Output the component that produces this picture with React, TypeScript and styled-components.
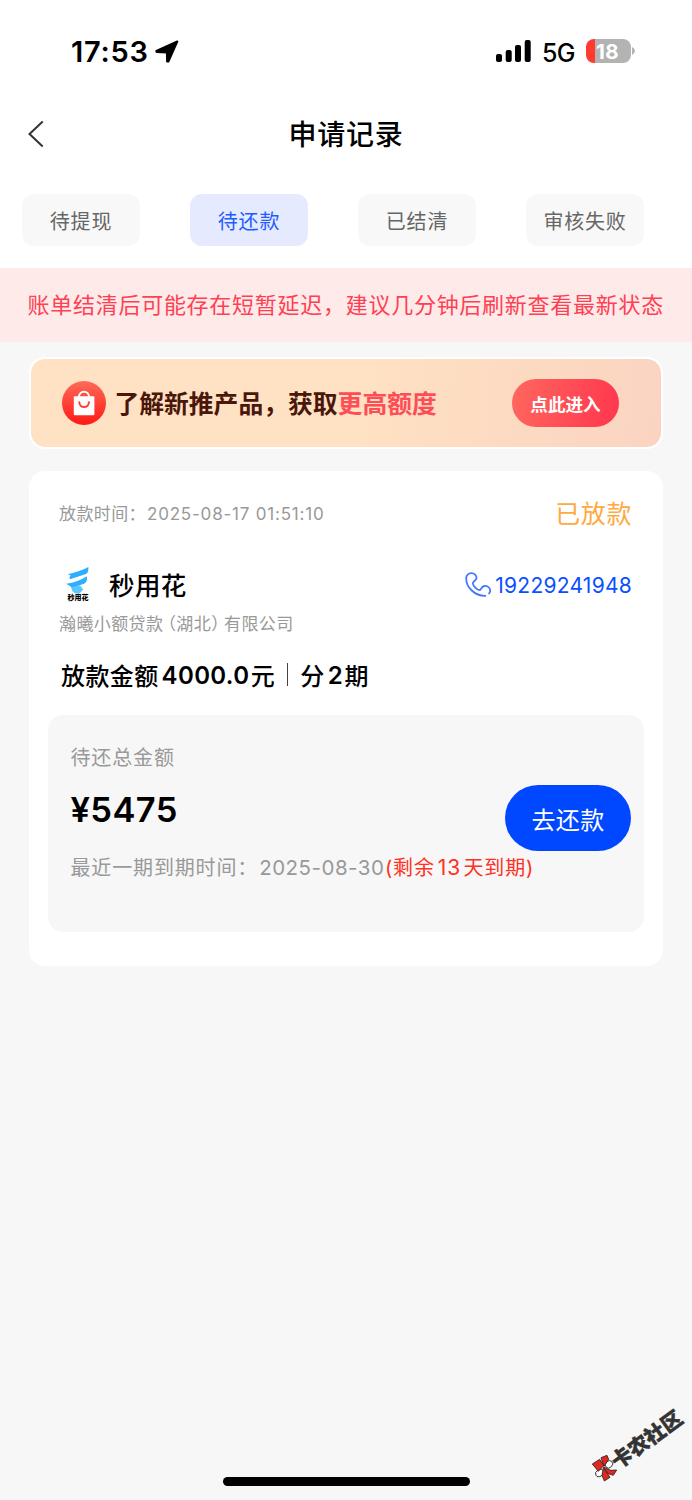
import React from "react";
import styled, { createGlobalStyle } from "styled-components";

const GlobalStyle = createGlobalStyle`
  * { box-sizing: border-box; }
  body {
    margin: 0;
    background: #f7f7f7;
    font-family: Inter, "Noto Sans CJK SC", sans-serif;
    color: #000;
  }
`;

const Page = styled.div`
  width: 692px;
  height: 1500px;
  display: flex;
  flex-direction: column;
  overflow: hidden;
  position: relative;
  background: #f7f7f7;
`;

const StatusBar = styled.header`
  height: 102px;
  padding: 0 57px 0 71px;
  background: #fff;
  display: flex;
  align-items: center;
  justify-content: space-between;
`;

const StatusGroup = styled.div`
  display: flex;
  align-items: center;
`;

const Clock = styled.span`
  font-size: 29px;
  font-weight: 600;
  line-height: 36px;
  width: 84px;
  padding-top: 1px;
  letter-spacing: 0.75px;
`;

const Network = styled.span`
  font-size: 25px;
  font-weight: 500;
  line-height: 30px;
  width: 44px;
  margin-left: 11px;
  margin-top: 3px;
  letter-spacing: -0.6px;
`;

const Battery = styled.div`
  width: 45px;
  height: 24px;
  border-radius: 8px;
  background: linear-gradient(90deg, #ff3b30 0 9px, #b3b3b3 9px);
  color: #fff;
  font-size: 20.5px;
  font-weight: 700;
  line-height: 25px;
  padding-left: 10px;
  letter-spacing: 0.3px;
`;

const NavBar = styled.nav`
  height: 64px;
  padding: 0 28px;
  background: #fff;
  display: grid;
  grid-template-columns: 40px 1fr 40px;
  align-items: center;
`;

const Title = styled.h1`
  margin: 0;
  padding-top: 2px;
  font-size: 28px;
  font-weight: 500;
  line-height: 40px;
  letter-spacing: 0.8px;
  text-align: center;
`;

const Tabs = styled.div`
  display: flex;
  gap: 50px;
  padding: 28px 22px 22px;
  background: #fff;
`;

const Tab = styled.button<{ $active?: boolean }>`
  width: 118px;
  height: 52px;
  padding: 0;
  border: 0;
  border-radius: 12px;
  font: inherit;
  font-size: 20px;
  letter-spacing: 0.8px;
  color: ${(p) => (p.$active ? "#1f5bff" : "#666")};
  background: ${(p) => (p.$active ? "#e5eaff" : "#f8f8f8")};
`;

const Notice = styled.div`
  height: 74px;
  padding-left: 27.5px;
  background: #fdeae9;
  color: #ff4053;
  font-size: 22px;
  letter-spacing: 0.73px;
  line-height: 75px;
  white-space: nowrap;
`;

const Banner = styled.section`
  height: 92px;
  margin: 15px 29px 0 29px;
  padding: 0 42px 0 31.4px;
  border: 2px solid #fff;
  border-radius: 16px;
  background: linear-gradient(95deg, #ffe1c3 0%, #ffe1c3 52%, #fad4c1 100%);
  background-clip: padding-box;
  display: flex;
  align-items: center;
`;

const BannerText = styled.div`
  flex: 1;
  margin-left: 8px;
  padding-top: 2px;
  font-size: 24.8px;
  font-weight: 700;
  line-height: 36px;
  color: #4c170b;
  white-space: nowrap;
`;

const Highlight = styled.span`
  color: #ff4d57;
`;

const EnterButton = styled.button`
  width: 107px;
  height: 48px;
  padding: 0;
  border: 0;
  border-radius: 24px;
  background: linear-gradient(100deg, #ff675e, #ff364e);
  color: #fff;
  font: inherit;
  font-size: 17.6px;
  font-weight: 700;
`;

const Card = styled.main`
  width: 634px;
  height: 495px;
  margin: 22px 0 0 29px;
  padding: 22px 19px 0;
  border-radius: 16px;
  background: #fff;
`;

const Row = styled.div<{ $height: number; $pull?: number }>`
  display: flex;
  align-items: center;
  justify-content: space-between;
  height: ${(p) => p.$height}px;
  margin-top: ${(p) => -(p.$pull ?? 0)}px;
  padding: 0 12px 0 11px;
  white-space: nowrap;
`;

const Meta = styled.div`
  display: flex;
  padding-top: 2px;
  font-size: 17px;
  letter-spacing: 0.4px;
  line-height: 26px;
  color: #999;
`;

const LoanDate = styled.span`
  margin-left: 1px;
  letter-spacing: 0.8px;
`;

const State = styled.span`
  margin-bottom: 2px;
  font-size: 25px;
  letter-spacing: 0.6px;
  color: #ffa940;
`;

const Lender = styled.div`
  display: flex;
  align-items: center;
  gap: 18px;
  padding-left: 6px;
`;

const LenderName = styled.h2`
  margin: 0;
  padding-top: 3px;
  font-size: 25.5px;
  font-weight: 500;
  line-height: 38px;
  letter-spacing: 0.4px;
`;

const Phone = styled.a`
  display: flex;
  align-items: center;
  gap: 3px;
  padding-top: 2px;
  color: #0b50ff;
  font-size: 21px;
  letter-spacing: 0.25px;
`;

const OpenParen = styled.span`
  margin-left: 4px;
  font-feature-settings: "halt";
`;

const CloseParen = styled.span`
  margin-right: 4px;
  font-feature-settings: "halt";
`;

const Summary = styled.div`
  display: flex;
  align-items: center;
  height: 40px;
  margin: 18px 0 21px 13px;
  font-size: 24px;
  font-weight: 500;
  letter-spacing: 0.4px;
  white-space: nowrap;
`;

const Figure = styled.span`
  margin: 0 1.5px 0 3px;
  padding-top: 2px;
  font-size: 24px;
  font-weight: 600;
  letter-spacing: 0.35px;
`;

const Divider = styled.i`
  width: 1px;
  height: 23px;
  margin: 0 12px 0 12px;
  background: #444;
`;

const DuePanel = styled.section`
  display: flex;
  justify-content: space-between;
  width: 596px;
  height: 217px;
  padding: 27px 13px 0 22.5px;
  border-radius: 15px;
  background: #f7f7f7;
`;

const DueInfo = styled.div`
  width: 430px;
  white-space: nowrap;
`;

const DueLabel = styled.div`
  font-size: 20px;
  letter-spacing: 0.85px;
  line-height: 32px;
  color: #999;
`;

const DueAmount = styled.div`
  margin: 14px 0 20px;
  font-size: 34.5px;
  font-weight: 600;
  line-height: 44px;
  letter-spacing: 0.4px;
`;

const DueDate = styled.span`
  margin-left: 1px;
  font-size: 20.5px;
  letter-spacing: 0.5px;
`;

const Remaining = styled.span`
  color: #ff3024;
  margin-left: 0.5px;
`;

const Days = styled.span`
  margin: 0 2.5px 0 3px;
  font-size: 21px;
`;

const RepayButton = styled.button`
  width: 126px;
  height: 66px;
  margin-top: 43px;
  padding: 0;
  border: 0;
  border-radius: 33px;
  background: #0048ff;
  color: #fff;
  font: inherit;
  font-size: 24px;
  letter-spacing: 0.3px;
`;

const HomeIndicator = styled.div`
  width: 247px;
  height: 9px;
  margin: auto auto 14px 223px;
  border-radius: 5px;
  background: #000;
`;

const WatermarkText = styled.div`
  position: absolute;
  left: 606px;
  top: 1426px;
  transform: rotate(-36deg);
  font-size: 20.5px;
  font-weight: 900;
  line-height: 28px;
  color: #333;
  -webkit-text-stroke: 0.5px #333;
  white-space: nowrap;
`;

const WatermarkBadge = styled.svg`
  position: absolute;
  left: 591px;
  top: 1454px;
  width: 27px;
  height: 28px;
`;

const LocationArrow = () => (
  <svg width="24" height="24" viewBox="0 0 24 24" stroke="#000" strokeWidth="2" strokeLinejoin="round">
    <path d="M1.3 11.9 22.3 2.5 13.4 22.5 12.1 22.4 11.9 13.5 1.6 13Z" />
  </svg>
);

const Signal = () => (
  <svg width="35" height="22" viewBox="0 0 35 22">
    <rect x="0" y="14" width="6" height="8" rx="2" />
    <rect x="9.7" y="10" width="6" height="12" rx="2" />
    <rect x="19" y="5" width="6" height="17" rx="2" />
    <rect x="28.7" y="0" width="6" height="22" rx="2" />
  </svg>
);

const BatteryTip = () => (
  <svg width="4" height="8" viewBox="0 0 4 8">
    <path d="M1 0Q4 1.5 4 4T1 8Z" fill="#b3b3b3" />
  </svg>
);

const BackArrow = () => (
  <svg width="16" height="28" viewBox="0 0 16 28" fill="none" stroke="#333" strokeWidth="2">
    <path d="M14.7 1.5 1.5 14 14.7 26.5" />
  </svg>
);

const BagIcon = () => (
  <svg width="44" height="44" viewBox="0 0 44 44">
    <defs>
      <linearGradient id="bag" x1="0" y1="0" x2="0" y2="1">
        <stop offset="0" stopColor="#ff6a58" />
        <stop offset="1" stopColor="#ff1a16" />
      </linearGradient>
    </defs>
    <circle cx="22" cy="22" r="22" fill="url(#bag)" />
    <path d="M17 17v-1.2a5 5 0 0 1 10 0V17" fill="none" stroke="#fff" strokeWidth="2" />
    <rect x="11.8" y="15.3" width="20.6" height="18.9" rx="1" fill="#fff" />
    <path d="M17.3 21.3a4.8 4.8 0 0 0 9.6 0" fill="none" stroke="#ff4038" strokeWidth="2" strokeLinecap="round" />
  </svg>
);

const LogoMark = styled.div`
  width: 26px;
  height: 35px;
  display: flex;
  flex-direction: column;
  align-items: center;
`;

const LogoDrawing = styled.svg`
  width: 24px;
  height: 27px;
  flex-shrink: 0;
`;

const LogoCaption = styled.span`
  font-size: 7px;
  font-weight: 900;
  line-height: 7px;
  white-space: nowrap;
`;

const Logo = () => (
  <LogoMark>
    <LogoDrawing viewBox="0 0 24 27">
      <path d="M22.4 0Q22.7 5.6 20 7.1L4 12.2Q2.6 10.6 4.6 8.6L1.8 7.2Q14 4.6 22.4 0Z" fill="#2eaeff" />
      <path d="M20.9 9.2Q21.6 14.4 18.5 16.5L6.5 20.8.2 16.8Q12 15 20.9 9.2Z" fill="#2eaeff" />
      <path d="M5 20.2 14 18.3 17.2 22.4 13.6 26.6Q9 27 6.6 24.4Z" fill="#5dc5ff" />
    </LogoDrawing>
    <LogoCaption>秒用花</LogoCaption>
  </LogoMark>
);

const PhoneIcon = () => (
  <svg width="27" height="26" viewBox="0 0 27 26" fill="none" stroke="#4378ff" strokeWidth="1.8" strokeLinecap="round" strokeLinejoin="round">
    <path d="M20.4 23.8C9.6 24 1.2 15.2 1.2 6.4 1.2 2.8 3.9 1 6.4 1.1c3 .1 5.3 2.5 5.1 5.2-.1 2.2-3.9 3.1-3.7 5 .2 2.5 4.2 6.7 6.7 6.9 1.4 0 1.9-3.6 4.8-4.2 2.5-.6 5.7 1.5 5.9 4.3.1 1.3-.4 2.3-1.1 3.3" />
  </svg>
);

const WatermarkIcon = () => (
  <WatermarkBadge viewBox="-2 -2 81 84" stroke="#222" strokeWidth="2.5">
    <ellipse cx="52" cy="29" rx="12" ry="10" transform="rotate(-45 52 29)" fill="#fff" />
    <ellipse cx="24" cy="55" rx="13" ry="10" transform="rotate(-30 24 55)" fill="#fff" />
    <path d="M2 28 24 14 37 32 20 50Z" fill="#e5261f" />
    <path d="M28 9 46 2 51 14 37 35Z" fill="#e5261f" />
    <path d="M36 37 57 47 75 46 65 62 49 57Z" fill="#e5261f" />
    <path d="M35 39 55 68 38 79 31 62Z" fill="#e5261f" />
  </WatermarkBadge>
);

const tabs = ["待提现", "待还款", "已结清", "审核失败"];

export default function App() {
  return (
    <Page>
      <GlobalStyle />
      <StatusBar>
        <StatusGroup>
          <Clock>17:53</Clock>
          <LocationArrow />
        </StatusGroup>
        <StatusGroup>
          <Signal />
          <Network>5G</Network>
          <Battery>18</Battery>
          <BatteryTip />
        </StatusGroup>
      </StatusBar>
      <NavBar>
        <BackArrow />
        <Title>申请记录</Title>
      </NavBar>
      <Tabs>
        {tabs.map((label) => (
          <Tab key={label} $active={label === "待还款"}>{label}</Tab>
        ))}
      </Tabs>
      <Notice>账单结清后可能存在短暂延迟，建议几分钟后刷新查看最新状态</Notice>
      <Banner>
        <BagIcon />
        <BannerText>了解新推产品，获取<Highlight>更高额度</Highlight></BannerText>
        <EnterButton>点此进入</EnterButton>
      </Banner>
      <Card>
        <Row $height={40}>
          <Meta>放款时间：<LoanDate>2025-08-17 01:51:10</LoanDate></Meta>
          <State>已放款</State>
        </Row>
        <Row $height={102}>
          <Lender>
            <Logo />
            <LenderName>秒用花</LenderName>
          </Lender>
          <Phone><PhoneIcon />19229241948</Phone>
        </Row>
        <Row $height={27} $pull={26}>
          <Meta>瀚曦小额贷款<OpenParen>（</OpenParen>湖北<CloseParen>）</CloseParen>有限公司</Meta>
        </Row>
        <Summary>
          放款金额<Figure>4000.0</Figure>元<Divider />分<Figure>2</Figure>期
        </Summary>
        <DuePanel>
          <DueInfo>
            <DueLabel>待还总金额</DueLabel>
            <DueAmount>¥5475</DueAmount>
            <DueLabel>
              最近一期到期时间：<DueDate>2025-08-30</DueDate>
              <Remaining>(剩余<Days>13</Days>天到期)</Remaining>
            </DueLabel>
          </DueInfo>
          <RepayButton>去还款</RepayButton>
        </DuePanel>
      </Card>
      <HomeIndicator />
      <WatermarkText>卡农社区</WatermarkText>
      <WatermarkIcon />
    </Page>
  );
}
